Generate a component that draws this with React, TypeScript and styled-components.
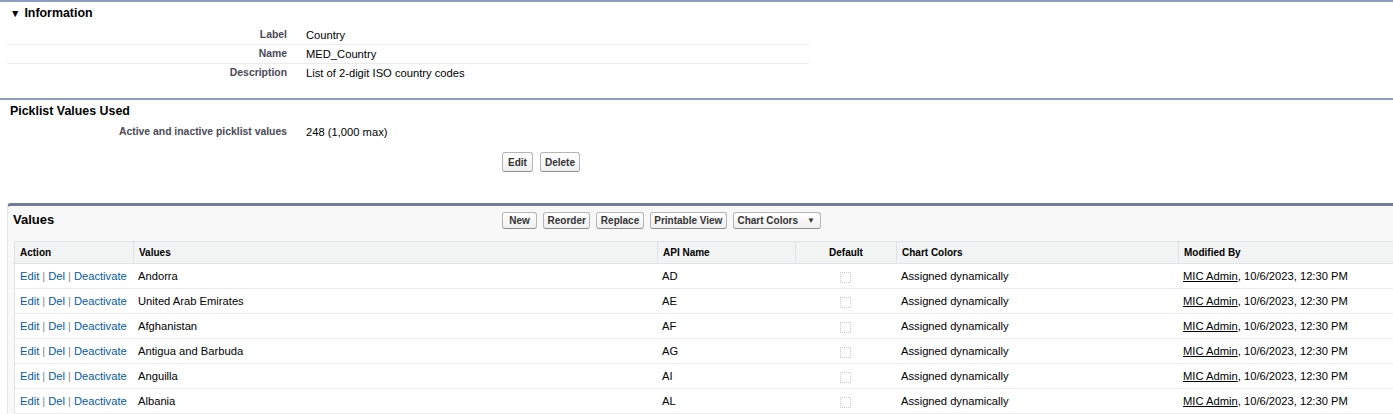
import React from "react";
import styled, { createGlobalStyle } from "styled-components";

const GlobalStyle = createGlobalStyle`
  html, body {
    margin: 0;
    padding: 0;
    background: #fff;
  }
  body {
    font-family: "Liberation Sans", Arial, Helvetica, sans-serif;
    color: #000;
  }
`;

const Page = styled.div`
  width: 1393px;
  height: 414px;
  overflow: hidden;
  background: #fff;
`;

const Section = styled.div<{ $gapBottom: number }>`
  border-top: 2px solid #8e9dbe;
  padding-bottom: ${(p) => p.$gapBottom}px;
`;

const SectionTitle = styled.h3`
  margin: 0;
  display: flex;
  align-items: center;
  height: 22px;
  padding-left: 10px;
  font-size: 12.4px;
  font-weight: bold;
`;

const Twisty = styled.span`
  font-size: 10.5px;
  margin-right: 4px;
`;

const DetailTable = styled.div<{ $top?: number }>`
  margin-left: 7px;
  margin-top: ${(p) => p.$top ?? 0}px;
  width: 802px;
  display: grid;
  grid-template-columns: 280px 1fr;
`;

const LabelCell = styled.div<{ $line?: boolean; $h?: number }>`
  height: ${(p) => p.$h ?? 18}px;
  line-height: ${(p) => p.$h ?? 18}px;
  text-align: right;
  font-size: 10.4px;
  font-weight: bold;
  color: #4a4a56;
  border-bottom: 1px solid ${(p) => (p.$line ? "#ececec" : "transparent")};
`;

const DataCell = styled.div<{ $line?: boolean; $h?: number }>`
  height: ${(p) => p.$h ?? 18}px;
  line-height: ${(p) => p.$h ?? 18}px;
  padding-left: 19px;
  font-size: 11.2px;
  border-bottom: 1px solid ${(p) => (p.$line ? "#ececec" : "transparent")};
`;

const ButtonRow = styled.div`
  display: flex;
  gap: 7px;
  padding-left: 502px;
  margin-top: 9px;
`;

const Btn = styled.button<{ $tall?: boolean; $min?: number }>`
  height: ${(p) => (p.$tall ? 20 : 17)}px;
  min-width: ${(p) => p.$min ?? 0}px;
  justify-content: center;
  padding: 0 ${(p) => (p.$tall ? 4 : 3.5)}px;
  font-family: "Liberation Sans", Arial, sans-serif;
  font-size: 10px;
  font-weight: bold;
  color: #333;
  background: linear-gradient(#ffffff, #efefef);
  border: 1px solid #b5b5b5;
  border-bottom-color: #8f8f8f;
  border-radius: 3px;
  display: inline-flex;
  align-items: center;
`;

const Caret = styled.span`
  font-size: 8px;
  margin-left: 9px;
  margin-right: 2px;
`;

const Block = styled.div`
  margin-left: 7px;
  width: 1405px;
  background: #f8f8f8;
  border-top: 3px solid #737d95;
  border-left: 1px solid #e6e6e6;
  border-radius: 4px 0 0 0;
`;

const BlockHeader = styled.div`
  display: grid;
  grid-template-columns: 489px auto;
  height: 35px;
  box-sizing: border-box;
  padding: 6px 0 0 5px;
`;

const BlockTitle = styled.h2`
  margin: 0;
  font-size: 13px;
  font-weight: bold;
  line-height: 15px;
`;

const HeaderButtons = styled.div`
  display: flex;
  gap: 6px;
`;

const Grid = styled.table`
  margin-left: 6px;
  border-collapse: separate;
  border-spacing: 0;
  table-layout: fixed;
  width: 1387px;
  border: 1px solid #e0e3e5;
  border-bottom: none;
  background: #fff;
`;

const Th = styled.th<{ $center?: boolean; $first?: boolean }>`
  background: #f2f3f3;
  font-size: 10px;
  font-weight: bold;
  text-align: ${(p) => (p.$center ? "center" : "left")};
  line-height: 21px;
  padding: 0 5px;
  border-bottom: 1px solid #e0e3e5;
  border-left: ${(p) => (p.$first ? "none" : "1px solid #e0e3e5")};
  white-space: nowrap;
`;

const Td = styled.td<{ $center?: boolean }>`
  font-size: 11.2px;
  line-height: 24px;
  padding: 0 5px;
  text-align: ${(p) => (p.$center ? "center" : "left")};
  border-bottom: 1px solid #ececec;
  white-space: nowrap;
  vertical-align: middle;
`;

const ActionLink = styled.a`
  color: #015ba7;
  text-decoration: none;
`;

const Sep = styled.span`
  color: #8a8a8a;
  margin: 0 3px;
`;

const UserLink = styled.a`
  color: #000;
  text-decoration: underline;
`;

const Check = styled.span`
  display: inline-block;
  width: 9px;
  height: 9px;
  border: 1px dotted #c9c9c9;
  vertical-align: middle;
`;

const rows = [
  ["Andorra", "AD"],
  ["United Arab Emirates", "AE"],
  ["Afghanistan", "AF"],
  ["Antigua and Barbuda", "AG"],
  ["Anguilla", "AI"],
  ["Albania", "AL"],
];

export default function App() {
  return (
    <Page>
      <GlobalStyle />
      <Section $gapBottom={15}>
        <SectionTitle>
          <Twisty>▼</Twisty>Information
        </SectionTitle>
        <DetailTable $top={2}>
          <LabelCell $line>Label</LabelCell>
          <DataCell $line>Country</DataCell>
          <LabelCell $line>Name</LabelCell>
          <DataCell $line>MED_Country</DataCell>
          <LabelCell>Description</LabelCell>
          <DataCell>List of 2-digit ISO country codes</DataCell>
        </DetailTable>
      </Section>

      <Section $gapBottom={31}>
        <SectionTitle>Picklist Values Used</SectionTitle>
        <DetailTable>
          <LabelCell $h={20}>Active and inactive picklist values</LabelCell>
          <DataCell $h={20}>248 (1,000 max)</DataCell>
        </DetailTable>
        <ButtonRow>
          <Btn $tall $min={31}>Edit</Btn>
          <Btn $tall>Delete</Btn>
        </ButtonRow>
      </Section>

      <Block>
        <BlockHeader>
          <BlockTitle>Values</BlockTitle>
          <HeaderButtons>
            <Btn $min={35}>New</Btn>
            <Btn>Reorder</Btn>
            <Btn>Replace</Btn>
            <Btn>Printable View</Btn>
            <Btn>
              Chart Colors<Caret>▼</Caret>
            </Btn>
          </HeaderButtons>
        </BlockHeader>
        <Grid>
          <colgroup>
            <col style={{ width: 118 }} />
            <col style={{ width: 524 }} />
            <col style={{ width: 138 }} />
            <col style={{ width: 101 }} />
            <col style={{ width: 282 }} />
            <col style={{ width: 222 }} />
          </colgroup>
          <thead>
            <tr>
              <Th $first>Action</Th>
              <Th>Values</Th>
              <Th>API Name</Th>
              <Th $center>Default</Th>
              <Th>Chart Colors</Th>
              <Th>Modified By</Th>
            </tr>
          </thead>
          <tbody>
            {rows.map(([name, code]) => (
              <tr key={code}>
                <Td>
                  <ActionLink href="#">Edit</ActionLink>
                  <Sep>|</Sep>
                  <ActionLink href="#">Del</ActionLink>
                  <Sep>|</Sep>
                  <ActionLink href="#">Deactivate</ActionLink>
                </Td>
                <Td>{name}</Td>
                <Td>{code}</Td>
                <Td $center>
                  <Check />
                </Td>
                <Td>Assigned dynamically</Td>
                <Td>
                  <UserLink href="#">MIC Admin</UserLink>, 10/6/2023, 12:30 PM
                </Td>
              </tr>
            ))}
          </tbody>
        </Grid>
      </Block>
    </Page>
  );
}
